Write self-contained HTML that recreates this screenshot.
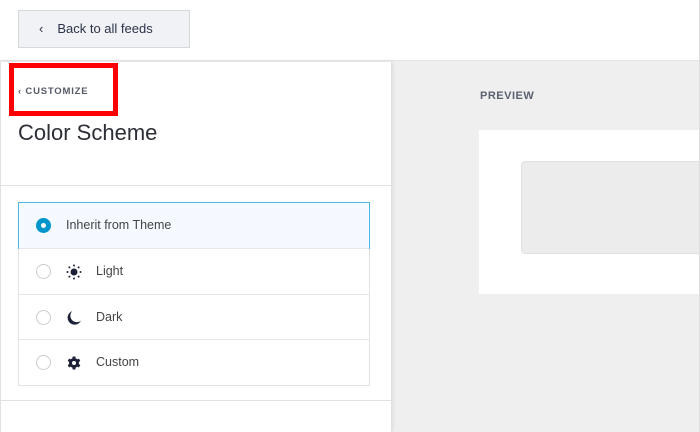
<!DOCTYPE html><html><head><style>
*{box-sizing:border-box;margin:0;padding:0}
body{width:700px;height:432px;overflow:hidden;background:#efefef;font-family:"Liberation Sans",sans-serif;position:relative;color:#2c2f36}
.top{position:absolute;left:0;top:0;width:700px;height:61px;background:#fff;border-bottom:1px solid #e4e4e4;border-right:1px solid #ddd}
.btn{position:absolute;left:18px;top:10px;width:172px;height:38px;background:#f1f2f5;border:1px solid #d6d8dc;font-size:13px;color:#2b3348;line-height:36px;padding-left:20px}
.side{position:absolute;left:0;top:62px;width:391px;height:370px;background:#fff;border-left:1px solid #e2e2e2;box-shadow:2px 0 4px rgba(0,0,0,.08)}
.red{position:absolute;left:9px;top:63px;width:109px;height:53px;border:5px solid #f00}
.cust{position:absolute;left:18px;top:86px;font-size:9.5px;letter-spacing:.8px;color:#555a66;font-weight:bold}
h1{position:absolute;left:18px;top:120px;font-size:22px;font-weight:normal;color:#2c2f36}
.hr{position:absolute;left:0;width:391px;height:1px;background:#e2e2e2}
.list{position:absolute;left:18px;top:202px;width:352px;border:1px solid #e2e2e2}
.row{height:45.5px;border-top:1px solid #e8e8e8;position:relative;font-size:12.5px;color:#444}
.row:first-child{border-top:none}
.row.sel{background:#f4faff;outline:1px solid #4bb8e0;height:45px}
.rad{position:absolute;left:17px;top:15px;width:15px;height:15px;border-radius:50%;border:1.5px solid #ccc}
.sel .rad{border:5px solid #0096cc;background:#fff}
.ic{position:absolute;left:47px;top:15px}
.lbl{position:absolute;left:77px;top:15px}
.sel .lbl{left:47px}
</style></head><body>
<div class="top"><div class="btn"><span style="margin-right:14px">&#8249;</span>Back to all feeds</div></div>
<div class="side">
</div>
<div class="cust">&#8249; CUSTOMIZE</div>
<div class="red"></div>
<h1>Color Scheme</h1>
<div class="hr" style="top:185px"></div>
<div class="hr" style="top:400px"></div>
<div class="list">
<div class="row sel"><div class="rad"></div><div class="lbl">Inherit from Theme</div></div>
<div class="row"><div class="rad"></div><svg class="ic" width="16" height="16" viewBox="0 0 16 16"><circle cx="8" cy="8" r="3.5" fill="#1d2137"/><g fill="#1d2137"><circle cx="8" cy="1.5" r="1"/><circle cx="8" cy="14.5" r="1"/><circle cx="1.5" cy="8" r="1"/><circle cx="14.5" cy="8" r="1"/><circle cx="3.4" cy="3.4" r="1"/><circle cx="12.6" cy="3.4" r="1"/><circle cx="3.4" cy="12.6" r="1"/><circle cx="12.6" cy="12.6" r="1"/></g></svg><div class="lbl">Light</div></div>
<div class="row"><div class="rad"></div><svg class="ic" width="16" height="16" viewBox="0 0 16 16"><path d="M6.5 1 A7 7 0 1 0 15 10.5 A6 6 0 0 1 6.5 1 Z" fill="#1d2137"/></svg><div class="lbl">Dark</div></div>
<div class="row"><div class="rad"></div><svg class="ic" width="16" height="16" viewBox="0 0 16 16"><g fill="#1d2137"><circle cx="8" cy="8" r="5"/><rect x="6.5" y="1.5" width="3" height="13" rx=".5"/><rect x="6.5" y="1.5" width="3" height="13" rx=".5" transform="rotate(60 8 8)"/><rect x="6.5" y="1.5" width="3" height="13" rx=".5" transform="rotate(120 8 8)"/></g><circle cx="8" cy="8" r="2" fill="#fff"/></svg><div class="lbl">Custom</div></div>
</div>
<div style="position:absolute;left:480px;top:90px;font-size:11px;font-weight:bold;color:#5a6070;letter-spacing:.5px">PREVIEW</div>
<div style="position:absolute;left:479px;top:130px;width:221px;height:164px;background:#fff"></div>
<div style="position:absolute;left:521px;top:161px;width:190px;height:93px;background:#ececec;border:1px solid #e0e0e0;border-radius:4px"></div>
<div style="position:absolute;left:699px;top:0;width:1px;height:432px;background:#ddd"></div>
</body></html>
